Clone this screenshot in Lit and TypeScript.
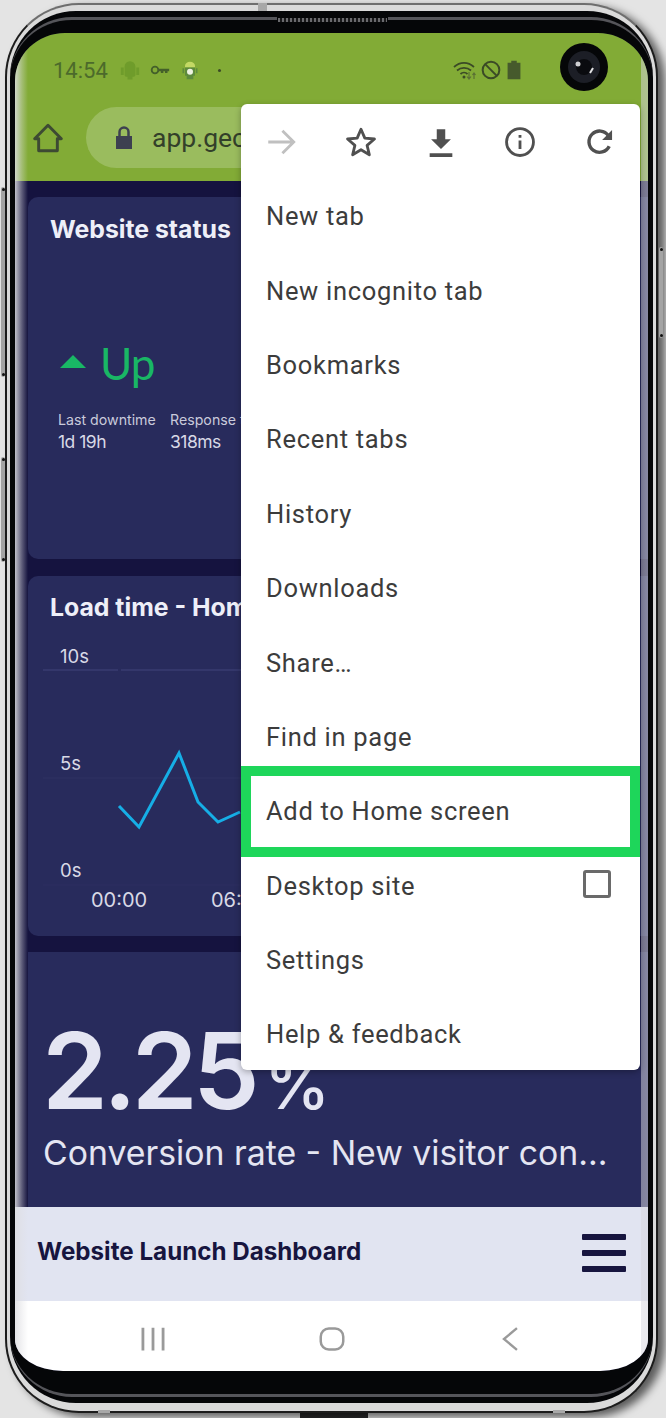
import { css, html, LitElement, svg } from "lit";
import { customElement } from "lit/decorators.js";

const menuItems = [
    "New tab",
    "New incognito tab",
    "Bookmarks",
    "Recent tabs",
    "History",
    "Downloads",
    "Share…",
    "Find in page",
    "Add to Home screen",
    "Desktop site",
    "Settings",
    "Help & feedback",
];

const icon = (body: unknown, size = 34) => html`
    <svg width="${size}" height="${size}" viewBox="0 0 24 24">${body}</svg>
`;

@customElement("app-root")
export class AppRoot extends LitElement {

    static styles = css`
        :host {
            display: block;
            width: 666px;
            height: 1418px;
            overflow: hidden;
            background: #e4e4e4;
            font-family: Roboto, sans-serif;
        }

        .page {
            position: relative;
            width: 666px;
            height: 1418px;
            padding: 3px 8px 5px 5px;
            box-sizing: border-box;
        }

        /* hardware bits that sit on the edge of the case */
        .side {
            position: absolute;
            z-index: 1;
            width: 4px;
            background: #a4a4a4;
            border-radius: 2px;
        }

        .side::before,
        .side::after {
            content: "";
            position: absolute;
            left: 1px;
            width: 3px;
            height: 3px;
            border-radius: 50%;
            background: #111;
        }

        .side::before {
            top: 1px;
        }

        .side::after {
            bottom: 1px;
        }

        .side.power {
            left: 1px;
            top: 187px;
            height: 190px;
        }

        .side.volume {
            left: 1px;
            top: 457px;
            height: 105px;
        }

        .side.bixby {
            left: 659px;
            top: 247px;
            height: 91px;
        }

        .tab {
            position: absolute;
            top: 1413px;
            left: 300px;
            width: 68px;
            height: 5px;
            background: #2a2a2c;
        }

        .case {
            position: relative;
            height: 100%;
            box-sizing: border-box;
            border: 2px solid #1c1c1c;
            border-top-color: #6e6e6e;
            border-radius: 74px;
            padding: 6px 3px 8px;
            background: #dadada;
            box-shadow: 7px 4px 9px rgba(0, 0, 0, 0.6);
        }

        .notch {
            position: absolute;
            background: #a8a8a8;
        }

        .notch.top {
            top: -2px;
            left: 251px;
            width: 9px;
            height: 8px;
        }

        .notch.bl {
            bottom: -2px;
            left: 91px;
            width: 12px;
            height: 3px;
        }

        .notch.br {
            bottom: -2px;
            left: 546px;
            width: 12px;
            height: 3px;
        }

        .bezel {
            position: relative;
            height: 100%;
            box-sizing: border-box;
            padding: 22px 5px 32px;
            border-radius: 66px;
            background: #050608;
        }

        .bezel::before {
            content: "";
            position: absolute;
            inset: 6px 0 6px;
            border: solid #55555a;
            border-width: 3px 0;
            border-radius: 62px;
        }

        .speaker {
            position: absolute;
            top: 6px;
            left: 267px;
            width: 111px;
            height: 6px;
            background: repeating-linear-gradient(90deg, #6a6a6e 0 2px, #18181a 2px 4px);
            border: 1px solid #050608;
            box-sizing: border-box;
        }

        .screen {
            position: relative;
            display: flex;
            flex-direction: column;
            height: 100%;
            border-radius: 50px 50px 48px 48px / 48px 48px 32px 32px;
            overflow: hidden;
            background: #15133f;
        }

        /* curved glass catching light on both long edges */
        .screen::before,
        .screen::after {
            content: "";
            position: absolute;
            top: 0;
            bottom: 0;
            z-index: 2;
            pointer-events: none;
        }

        .screen::before {
            left: 0;
            width: 13px;
            background: linear-gradient(90deg, rgba(222, 222, 226, 0.85), rgba(222, 222, 226, 0.35) 55%, rgba(222, 222, 226, 0));
        }

        .screen::after {
            right: 0;
            width: 7px;
            background: linear-gradient(90deg, rgba(214, 214, 222, 0.5), rgba(214, 214, 222, 0.55));
        }

        .chrome {
            display: flex;
            flex-direction: column;
            height: 148px;
            flex: none;
            background: #82ab36;
            box-sizing: border-box;
        }

        .status {
            display: flex;
            align-items: center;
            height: 74px;
            padding-left: 38px;
            flex: none;
        }

        .clock {
            font-size: 22px;
            color: #4c6a2b;
            margin-right: 12px;
        }

        .status svg {
            display: block;
        }

        .status-left {
            display: flex;
            align-items: center;
            gap: 10px;
        }

        .dot {
            width: 3px;
            height: 3px;
            border-radius: 50%;
            background: #3b4a26;
            margin-left: 8px;
        }

        .status-right {
            display: flex;
            align-items: center;
            gap: 2px;
            margin-left: auto;
            margin-right: 123px;
        }

        .status-right svg:first-child {
            margin-right: 2px;
        }

        .camera {
            position: absolute;
            top: 10px;
            left: 545px;
            width: 48px;
            height: 48px;
            z-index: 1;
        }

        .toolbar {
            display: flex;
            align-items: center;
            gap: 22px;
            padding-left: 17px;
            height: 61px;
        }

        .url {
            display: flex;
            align-items: center;
            gap: 16px;
            height: 61px;
            width: 500px;
            padding-left: 26px;
            box-sizing: border-box;
            border-radius: 31px;
            background: #9abc5e;
            font-size: 26.5px;
            color: #33402a;
            white-space: nowrap;
        }

        .dash {
            flex: 1;
            display: flex;
            flex-direction: column;
            gap: 17px;
            padding: 16px 0 0 13px;
            min-height: 0;
            font-family: Inter, sans-serif;
            color: #e4e5f2;
        }

        .card {
            background: #282b5c;
            border-radius: 10px 0 0 10px;
            padding: 16px 22px;
            box-sizing: border-box;
            overflow: hidden;
            white-space: nowrap;
            flex: none;
        }

        .status-card {
            height: 362px;
            padding-top: 17px;
        }

        .load-card {
            height: 360px;
        }

        .card h2 {
            margin: 0;
            font-size: 24.8px;
            line-height: 30px;
            font-weight: 700;
            color: #eeeff8;
        }

        .up {
            display: flex;
            align-items: center;
            gap: 14px;
            margin: 94px 0 0 10px;
            color: #19b765;
            font-family: Lato, sans-serif;
            font-size: 44px;
            line-height: 50px;
            letter-spacing: -1px;
        }

        .tri {
            width: 0;
            height: 0;
            border: 13px solid transparent;
            border-top: 0;
            border-bottom: 13px solid #19b765;
            margin-top: -4px;
        }

        .stats {
            display: flex;
            gap: 14px;
            margin: 23px 0 0 8px;
        }

        .stat {
            width: 98px;
        }

        .stat .label {
            font-size: 14.2px;
            line-height: 18px;
            color: #c9cadb;
        }

        .stat .value {
            font-size: 17.5px;
            line-height: 26px;
            letter-spacing: -0.5px;
            color: #d8d9e6;
        }

        .chart {
            display: block;
            margin: 14px 0 0 -22px;
        }

        .chart text {
            font-family: Inter, sans-serif;
            font-size: 18.5px;
            fill: #d8d9e6;
        }

        .chart text.tick {
            font-size: 20px;
        }

        .rate {
            flex: 1;
            min-height: 0;
            margin-top: -1px;
            background: #282b5c;
            padding: 64px 0 0 16px;
            white-space: nowrap;
            overflow: hidden;
        }

        .big {
            font-size: 106px;
            line-height: 110px;
            font-weight: 600;
            letter-spacing: -5px;
            margin-left: -2px;
            color: #e4e5f2;
        }

        .big small {
            font-size: 66px;
            line-height: 1;
            font-weight: 500;
            letter-spacing: 0;
            margin-left: 10px;
        }

        .sub {
            font-size: 33.8px;
            line-height: 40px;
            color: #e4e5f2;
            margin: 7px 0 0 -1px;
        }

        .footer {
            flex: none;
            display: flex;
            align-items: center;
            justify-content: space-between;
            height: 94px;
            box-sizing: border-box;
            padding: 0 22px 6px;
            background: #e1e4f1;
            color: #17153f;
        }

        .footer .title {
            font-family: Inter, sans-serif;
            font-size: 24.2px;
            font-weight: 700;
        }

        .burger {
            display: flex;
            flex-direction: column;
            gap: 9.500px;
            margin-top: 4px;
        }

        .burger i {
            display: block;
            width: 44px;
            height: 6.500px;
            border-radius: 1px;
            background: #17153f;
        }

        .nav {
            flex: none;
            display: flex;
            align-items: center;
            justify-content: space-between;
            height: 70px;
            padding: 5px 124px 0 125px;
            box-sizing: border-box;
            background: #fff;
        }

        .menu {
            position: absolute;
            top: 71px;
            left: 226px;
            width: 399px;
            height: 966px;
            z-index: 3;
            box-sizing: border-box;
            background: #fff;
            border-radius: 6px;
            box-shadow: 0 2px 6px rgba(0, 0, 0, 0.3);
            color: #3c3c3c;
        }

        .menu-icons {
            display: flex;
            align-items: center;
            justify-content: space-between;
            height: 75px;
            padding: 0 23px;
        }

        .menu-list {
            list-style: none;
            margin: 0;
            padding: 0;
        }

        .menu-list li {
            position: relative;
            display: flex;
            align-items: center;
            justify-content: space-between;
            height: 74.400px;
            padding: 0 29px 0 25px;
            font-size: 25.5px;
            letter-spacing: 0.7px;
            box-sizing: border-box;
        }

        .menu-list li.hl::after {
            content: "";
            position: absolute;
            inset: -8.500px 0;
            border: 10px solid #1ed65a;
        }

        .check {
            width: 22px;
            height: 22px;
            border: 3px solid #6a6a6a;
            border-radius: 3px;
            margin-bottom: 4px;
        }
    `;

    private renderChart() {
        return html`
            <svg class="chart" width="240" height="280" viewBox="0 0 240 280">
                <path d="M15 34H90M93 34H240" stroke="#40447a" stroke-width="1"></path>
                <line x1="15" y1="142" x2="240" y2="142" stroke="#2f3262" stroke-width="1"></line>
                <line x1="15" y1="249" x2="240" y2="249" stroke="#2c2f60" stroke-width="1"></line>
                <text x="32" y="27">10s</text>
                <text x="32" y="134">5s</text>
                <text x="32" y="241">0s</text>
                <text class="tick" x="63" y="271">00:00</text>
                <text class="tick" x="183" y="271">06:00</text>
                <polyline fill="none" stroke="#16aee6" stroke-width="3"
                    points="91,170 111,191 151,117 170,166 190,186 212,176"></polyline>
            </svg>
        `;
    }

    private renderStatusBar() {
        return html`
            <div class="status">
                <span class="clock">14:54</span>
                <div class="status-left">
                    ${icon(svg`<path fill="#6f9c2b" d="M5.500 8a6.500 6.500 0 0 1 13 0v10a2 2 0 0 1-2 2h-1.500v3.500h-6V20H7.500a2 2 0 0 1-2-2zM1 9h3.500v9H1zM19.500 9H23v9h-3.500z"></path>`, 20)}
                    ${icon(svg`<circle cx="6" cy="12" r="4" fill="none" stroke="#44602a" stroke-width="2.200"></circle><path d="M10 10.500h13v3h-2v2h-3v-2h-2v2h-3v-2h-3z" fill="#44602a"></path>`, 20)}
                    ${icon(svg`<path fill="#c3d964" d="M6 7a6 5 0 0 1 12 0v2H6z"></path><path fill="#5d8a3c" d="M6 9h12v10h-2v4h-8v-4H6zM3 10h2v6H3zM19 10h2v6h-2z"></path><circle cx="12" cy="14" r="3.600" fill="#eef2e2"></circle>`, 20)}
                    <span class="dot"></span>
                </div>
                <div class="status-right">
                    ${icon(svg`<path fill="none" stroke="#3b4a26" stroke-width="1.800" d="M1 9c6-5.500 14-5.500 20 0M4 12.500c4-3.500 10-3.500 14 0M7.500 16c2-1.800 5-1.800 7 0"></path><circle cx="11" cy="19" r="1.500" fill="#3b4a26"></circle><path d="M16 14v7M14 18.500l2 2.500 2-2.500M21 21v-6M19.500 17l1.500-2 1.500 2" fill="none" stroke="#5a7034" stroke-width="1.200"></path>`, 24)}
                    ${icon(svg`<circle cx="12" cy="12" r="10" fill="none" stroke="#3b4a26" stroke-width="2.400"></circle><path d="M5 5l14 14" stroke="#3b4a26" stroke-width="2.400"></path>`, 20)}
                    ${icon(svg`<path fill="#465a2c" d="M9 2h6v2h4v18H5V4h4z"></path>`, 22)}
                </div>
            </div>
        `;
    }

    private renderMenu() {
        return html`
            <div class="menu">
                <div class="menu-icons">
                    ${icon(svg`<path d="M3 12h18M13 4l8 8-8 8" fill="none" stroke="#c0c0c0" stroke-width="2"></path>`)}
                    ${icon(svg`<path d="M12 3l2.700 6.300 6.800.6-5.200 4.500 1.600 6.600L12 17.500 6.100 21l1.600-6.600L2.500 9.900l6.800-.6z" fill="none" stroke="#505050" stroke-width="2" stroke-linejoin="round"></path>`)}
                    ${icon(svg`<path fill="#505050" d="M9 3h6v7h4l-7 7-7-7h4zM4 20h16v2.500H4z"></path>`)}
                    ${icon(svg`<circle cx="12" cy="12" r="9.500" fill="none" stroke="#505050" stroke-width="2"></circle><path fill="#505050" d="M11 11h2v6h-2zM11 7h2v2h-2z"></path>`)}
                    ${icon(svg`<path fill="none" stroke="#505050" stroke-width="2.400" d="M18.500 15a7.500 7.500 0 1 1-.6-7.500"></path><path fill="#505050" d="M20.500 3.500v7h-7z"></path>`)}
                </div>
                <ul class="menu-list">
                    ${menuItems.map((item) => html`
                        <li class="${item === "Add to Home screen" ? "hl" : ""}">
                            <span>${item}</span>
                            ${item === "Desktop site" ? html`<span class="check"></span>` : ""}
                        </li>
                    `)}
                </ul>
            </div>
        `;
    }

    protected render() {
        return html`
            <div class="page">
                <span class="side power"></span>
                <span class="side volume"></span>
                <span class="side bixby"></span>
                <span class="tab"></span>
                <div class="case">
                    <span class="notch top"></span>
                    <span class="notch bl"></span>
                    <span class="notch br"></span>
                    <div class="bezel">
                        <div class="speaker"></div>
                        <div class="screen">
                            <div class="chrome">
                                ${this.renderStatusBar()}
                                <div class="toolbar">
                                    ${icon(svg`<path fill="none" stroke="#3d4a33" stroke-width="2.200" stroke-linejoin="round" d="M2 12.500L12 2.500l10 10h-3V21.500H5v-9z"></path>`, 32)}
                                    <div class="url">
                                        ${icon(svg`<path fill="#3d4050" d="M4 10h16v13H4z"></path><path fill="none" stroke="#3d4050" stroke-width="2.500" d="M7.500 10V6a4.500 4.500 0 0 1 9 0v4"></path>`, 24)}
                                        <span>app.geckoboard.com</span>
                                    </div>
                                </div>
                            </div>
                            <div class="dash">
                                <section class="card status-card">
                                    <h2>Website status</h2>
                                    <div class="up"><span class="tri"></span><span>Up</span></div>
                                    <div class="stats">
                                        <div class="stat"><div class="label">Last downtime</div><div class="value">1d 19h</div></div>
                                        <div class="stat"><div class="label">Response time</div><div class="value">318ms</div></div>
                                    </div>
                                </section>
                                <section class="card load-card">
                                    <h2>Load time - Homepage</h2>
                                    ${this.renderChart()}
                                </section>
                                <section class="rate">
                                    <div class="big">2.25<small>%</small></div>
                                    <div class="sub">Conversion rate - New visitor con...</div>
                                </section>
                            </div>
                            <div class="footer">
                                <span class="title">Website Launch Dashboard</span>
                                <div class="burger"><i></i><i></i><i></i></div>
                            </div>
                            <div class="nav">
                                ${icon(svg`<path d="M2.700 1.500v21M12 1.500v21M21.300 1.500v21" stroke="#9a9a9a" stroke-width="2.600"></path>`, 26)}
                                ${icon(svg`<rect x="3" y="3.600" width="18" height="16.800" rx="6.500" fill="none" stroke="#9a9a9a" stroke-width="2"></rect>`, 30)}
                                ${icon(svg`<path d="M17.500 2L5.500 12l12 10" fill="none" stroke="#9a9a9a" stroke-width="2.200"></path>`, 26)}
                            </div>
                            <svg class="camera" viewBox="0 0 48 48">
                                <circle cx="24" cy="24" r="24" fill="#050608"></circle>
                                <circle cx="24" cy="24" r="16" fill="#1c1e26"></circle>
                                <circle cx="24" cy="24" r="8" fill="#0a0b0f"></circle>
                                <circle cx="18" cy="21" r="2.500" fill="#cfcfd2"></circle>
                                <path d="M30 30l3-5" stroke="#e2e2e4" stroke-width="2"></path>
                            </svg>
                            ${this.renderMenu()}
                        </div>
                    </div>
                </div>
            </div>
        `;
    }
}
